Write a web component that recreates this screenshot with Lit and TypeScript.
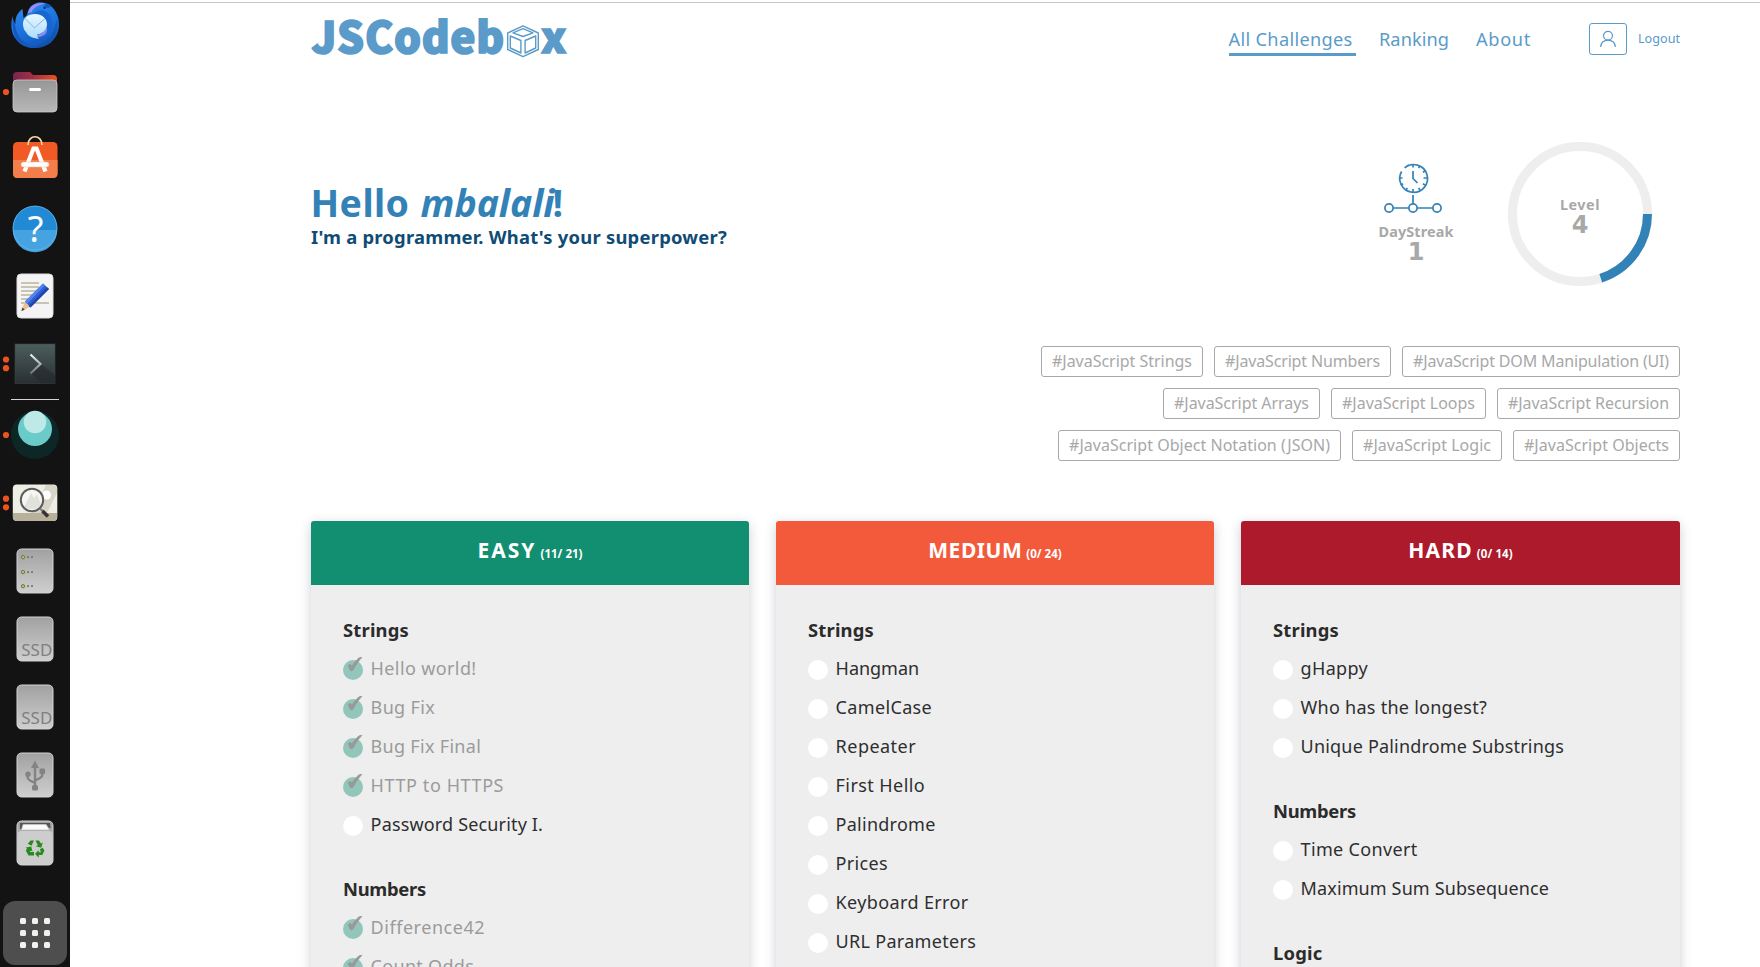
import { LitElement, html, css, svg, nothing } from "lit";
import { customElement, property } from "lit/decorators.js";

/** Single line label whose tracking is adjusted so that it spans `w` pixels. */
@customElement("ui-text")
class UiText extends LitElement {
  @property({ type: Number }) w = 0;
  static styles = css`
    :host { display: inline-block; white-space: nowrap; }
  `;
  firstUpdated() {
    const n = (this.textContent ?? "").length;
    if (!this.w || !n) return;
    const natural = this.getBoundingClientRect().width;
    this.style.letterSpacing = `${((this.w + 2 - natural) / n).toFixed(3)}px`;
  }
  render() {
    return html`<slot></slot>`;
  }
}

type Item = [label: string, width: number, done?: boolean];
type Section = { title: string; w: number; items: Item[] };
type Level = { name: string; w: number; count: string; cw: number; tone: string; sections: Section[] };

const LEVELS: Level[] = [
  {
    name: "EASY", w: 57, count: "(11/ 21)", cw: 40, tone: "easy",
    sections: [
      { title: "Strings", w: 64, items: [["Hello world!", 104, true], ["Bug Fix", 62.5, true], ["Bug Fix Final", 108.5, true], ["HTTP to HTTPS", 131.5, true], ["Password Security I.", 170.5]] },
      { title: "Numbers", w: 81, items: [["Difference42", 112.5, true], ["Count Odds", 101.5, true]] },
    ],
  },
  {
    name: "MEDIUM", w: 92, count: "(0/ 24)", cw: 33.5, tone: "medium",
    sections: [
      { title: "Strings", w: 64, items: [["Hangman", 81.5], ["CamelCase", 94.5], ["Repeater", 78.5], ["First Hello", 87.5], ["Palindrome", 98], ["Prices", 50.5], ["Keyboard Error", 131], ["URL Parameters", 138.5]] },
    ],
  },
  {
    name: "HARD", w: 62.5, count: "(0/ 14)", cw: 34, tone: "hard",
    sections: [
      { title: "Strings", w: 64, items: [["gHappy", 65.5], ["Who has the longest?", 184.5], ["Unique Palindrome Substrings", 261.5]] },
      { title: "Numbers", w: 81, items: [["Time Convert", 115], ["Maximum Sum Subsequence", 246.5]] },
      { title: "Logic", w: 47.5, items: [] },
    ],
  },
];

const TAGS: [string, number][][] = [
  [["#JavaScript Strings", 138], ["#JavaScript Numbers", 153], ["#JavaScript DOM Manipulation (UI)", 254]],
  [["#JavaScript Arrays", 133], ["#JavaScript Loops", 131], ["#JavaScript Recursion", 159]],
  [["#JavaScript Object Notation (JSON)", 259], ["#JavaScript Logic", 126], ["#JavaScript Objects", 143]],
];

@customElement("level-card")
class LevelCard extends LitElement {
  @property({ attribute: false }) level!: Level;
  static styles = css`
    :host { display: block; background: #eee; border-radius: 3px 3px 0 0; box-shadow: 0 3px 12px rgba(40, 50, 80, 0.24); min-height: 700px; }
    .head { height: 64px; border-radius: 3px 3px 0 0; color: #fff; font-weight: 700; display: flex; justify-content: center; gap: 4px; font-size: 21px; line-height: 58px; }
    .count { font-size: 11.5px; line-height: 65px; }
    .easy { background: #128f70; }
    .medium { background: #f35a3b; }
    .hard { background: #ad1a2b; }
    .body { padding: 28px 0 0 32px; }
    .section { padding-bottom: 27px; }
    .title { height: 37px; line-height: 33px; font-size: 18.4px; font-weight: 700; color: #2b2b2b; display: flex; }
    .item { height: 39px; display: flex; gap: 7.6px; font-size: 18px; line-height: 36px; color: #2e2e2e; }
    .done { color: #9b9b9b; }
    .dot { width: 20px; height: 20px; margin-top: 10px; border-radius: 50%; background: #fff; flex: none; }
    .done .dot { background: #92c6ba; }
    .tick { display: block; overflow: visible; }
  `;
  render() {
    const l = this.level;
    return html`
      <div class="head ${l.tone}"><ui-text .w=${l.w}>${l.name}</ui-text><ui-text class="count" .w=${l.cw}>${l.count}</ui-text></div>
      <div class="body">
        ${l.sections.map((s) => html`
          <div class="section">
            <div class="title"><ui-text .w=${s.w}>${s.title}</ui-text></div>
            ${s.items.map(([label, w, done]) => html`
              <div class="item ${done ? "done" : ""}">
                <span class="dot">${done
                  ? html`<svg class="tick" width="20" height="20"><path d="M5.300 5.500C6 4.300 8 4 8.500 5.800L8.900 6.700C11 2.500 14.500 -1.500 17 -2.400L18.800 -2.600C15.500 .8 12.500 5 10.300 9.700C9.500 11 7.600 11.200 7.100 10C6.500 8.400 5.900 7 5.300 5.500Z" fill="#999" stroke="#999" stroke-width=".9" stroke-linejoin="round" /></svg>`
                  : nothing}</span>
                <ui-text .w=${w}>${label}</ui-text>
              </div>`)}
          </div>`)}
      </div>`;
  }
}

const run = (...ys: number[]) => ys.map((y) => svg`<circle cx="6" cy=${y} r="3.1" fill="#ed5320"/>`);
const plate = svg`<rect x="17" y="12" width="36" height="44" rx="4.500" fill="url(#plate)" stroke="#d4d4d4" stroke-width="1"/>`;

@customElement("app-dock")
class AppDock extends LitElement {
  static styles = css`
    :host { display: flex; flex-direction: column; width: 70px; height: 967px; background: #131313; overflow: hidden; flex: none; font-family: "Noto Sans", sans-serif; }
    svg { display: block; flex: none; }
    .rule { height: 1px; margin: 1px 11px; background: #d5d5d5; flex: none; }
    .apps { width: 64px; height: 64px; margin: 24px 3px 0; border-radius: 12px; background: #4e4e4e; flex: none; display: grid; grid-template-columns: repeat(3, 6px); grid-auto-rows: 6px; gap: 6px; place-content: center; }
    .apps i { background: #f2f1ee; border-radius: 1.5px; }
  `;
  slotSvg(content: unknown) {
    return html`<svg width="70" height="68" viewBox="0 0 70 68">
      <defs>
        <linearGradient id="plate" x1="0" y1="0" x2="0" y2="1"><stop offset="0" stop-color="#a1a1a1"/><stop offset="1" stop-color="#cfcfcf"/></linearGradient>
        <linearGradient id="fold" x1="0" y1="0" x2="1" y2="0"><stop offset="0" stop-color="#77264f"/><stop offset=".45" stop-color="#a32f43"/><stop offset="1" stop-color="#e95420"/></linearGradient>
        <linearGradient id="front" x1="0" y1="0" x2="0" y2="1"><stop offset="0" stop-color="#969696"/><stop offset="1" stop-color="#b8b8b8"/></linearGradient>
        <linearGradient id="term" x1="0" y1="0" x2="0" y2="1"><stop offset="0" stop-color="#4c5e5c"/><stop offset="1" stop-color="#292e33"/></linearGradient>
        <linearGradient id="prompt" x1="0" y1="0" x2="0" y2="1"><stop offset="0" stop-color="#f0f0f0"/><stop offset="1" stop-color="#667474"/></linearGradient>
      </defs>${content}</svg>`;
  }
  render() {
    return html`
      <svg width="70" height="58" viewBox="0 0 70 58">
        <defs>
          <linearGradient id="bird" x1=".2" y1="0" x2=".6" y2="1"><stop offset="0" stop-color="#2f8df0"/><stop offset=".6" stop-color="#1a6fdc"/><stop offset="1" stop-color="#1155b8"/></linearGradient>
          <linearGradient id="mail" x1="0" y1="0" x2="0" y2="1"><stop offset="0" stop-color="#e9f7ff"/><stop offset="1" stop-color="#a9dcfb"/></linearGradient>
        </defs>
        <path d="M12.500 16C10.500 24 11 32 15 38C19.500 45 27 48.500 36 48C49 47.500 58.500 38 59 25C59.200 16 55 8 48 4C41 .8 33 2.500 29.500 8C27 12 28 14 26 16L23.500 18L22.500 9C17 13 15 18 15.500 24C13.500 22 12.600 19 12.500 16Z" fill="url(#bird)"/>
        <path d="M28 13C30 5 38 1.500 46 3.400C39 4 34 7 31.500 12Z" fill="#a98cf2"/>
        <path d="M46 3.500Q52 4.500 50.500 7Q47 9 43 7Z" fill="#135ac0"/>
        <circle cx="44.500" cy="8" r="1.100" fill="#082b70"/>
        <path d="M31 15Q41 6 49 14Q55 22 50 32Q45 39 35 38Q47 34 46 24Q44 16 31 15Z" fill="#1767d2"/>
        <path d="M15 24Q16 40 32 46Q23 47 17 40Q12 33 12.500 18Z" fill="#1457bd"/>
        <path d="M57 19Q60 34 49 43Q41 49 31 47Q49 43 54 30Z" fill="#0f50ae" opacity=".6"/>
        <path d="M34 36Q44 34 47 27Q48 34 42 36Q38 38 34 36Z" fill="#8f8af0"/>
        <path d="M23 24C23 18 28 14 35 14C42 14 47 18.500 47 24.500C47 30 42 34 37 34.500Q37 37 39 39C32 38 28 36 26 32Q23 29 23 24Z" fill="url(#mail)"/>
        <path d="M25 18.500L34.500 28L45 18.500" fill="none" stroke="#7fb9ea" stroke-width="1"/>
      </svg>
      ${this.slotSvg(svg`${run(34)}<path d="M13 26V18Q13 14 17 14H29Q31 14 32 16L33 17H53Q57 17 57 21V30H13Z" fill="url(#fold)"/><rect x="13" y="22" width="44" height="32" rx="4" fill="url(#front)" stroke="#cbcbcb" stroke-width=".8"/><rect x="29" y="30" width="12" height="3" rx="1.500" fill="#fff"/>`)}
      ${this.slotSvg(svg`<rect x="13" y="16" width="44.500" height="36" rx="4.500" fill="#f15a24"/><path d="M13 34H57.500V47.500Q57.500 52 53 52H17.500Q13 52 13 47.500Z" fill="#f47d4c"/><path d="M28 19C28 8 42 8 42 19" fill="none" stroke="#f9d9a4" stroke-width="1.700"/><path d="M24.500 45.500L33.500 22.500H36.500L45.500 45.500" fill="none" stroke="#fff" stroke-width="4.200"/><rect x="21" y="36" width="28" height="5" rx="2.500" fill="#fff" stroke="#f3b79b" stroke-width=".5"/>`)}
      ${this.slotSvg(svg`<circle cx="35" cy="34" r="22.300" fill="#228ad5"/><path d="M12.700 36A22.300 22.300 0 0 0 57.300 36Z" fill="#45a3e2"/><circle cx="35" cy="34" r="21.900" fill="none" stroke="#65b2e5" stroke-width=".8"/><text x="35.500" y="47.500" text-anchor="middle" font-size="36" fill="#fff" font-family="Noto Sans">?</text>`)}
      ${this.slotSvg(svg`<rect x="17" y="12" width="36" height="44" rx="4" fill="#f4f4f4" stroke="#ddd"/><path d="M21 21H39M21 25H39M21 29H37M21 33H35M21 37H33M21 41H49" stroke="#c8c4b4" stroke-width="1.800"/><path d="M21.300 49L25 39.500L30 45Z" fill="#f0c08b"/><path d="M21.300 49L22.500 45.500L24.800 47.700Z" fill="#444"/><path d="M25 39.500L43 21.500L49 27L30.500 45.500Z" fill="#2e5ed5"/><path d="M25 39.500L43 21.500L45 23.300L27 42Z" fill="#5484ef"/><path d="M28.700 44L47 25.300L49 27L30.500 45.500Z" fill="#1e46a5"/>`)}
      ${this.slotSvg(svg`${run(29.5, 38.2)}<rect x="15" y="14" width="40" height="39.500" fill="url(#term)" stroke="#38484a" stroke-width=".6"/><path d="M41 34L55 45V53.500H42L31 43Z" fill="#20252a" opacity=".5"/><path d="M30.500 24.500L40.500 34L30.500 43.500" fill="none" stroke="url(#prompt)" stroke-width="2.200"/>`)}
      <div class="rule"></div>
      ${this.slotSvg(svg`${run(34)}<circle cx="35" cy="34" r="24" fill="#0d2726"/><circle cx="35" cy="28" r="17" fill="#6acbc9"/><circle cx="35" cy="21" r="11.300" fill="#bde9e7"/>`)}
      ${this.slotSvg(svg`${run(29.7, 38.3)}<rect x="12.800" y="15.500" width="44.500" height="36.500" rx="4" fill="#eeeee5"/><path d="M13 44H57V48Q57 52 53 52H17Q13 52 13 48Z" fill="#b7b09b"/><path d="M32 44L46 16H53Q57 16 57 20V24L47 44Z" fill="#d9d5c9"/><circle cx="46.500" cy="26" r="4.500" fill="#fff"/><circle cx="32" cy="31" r="11.200" fill="#f7f7f4" fill-opacity=".85"/><path d="M24 38L31 24L34 29L37 25L41 36Q34 43 24 38Z" fill="#e2e2dd"/><circle cx="32" cy="31" r="11.200" fill="none" stroke="#5d5d5d" stroke-width="2"/><path d="M40.500 40L43 42.500" stroke="#777" stroke-width="2"/><path d="M42.500 42L48 47.500" stroke="#333" stroke-width="3.600"/>`)}
      ${this.slotSvg(svg`${plate}${[20.2, 35.1, 49.2].map((y) => svg`<circle cx="23" cy=${y} r="1.700" fill="#a4d13e" stroke="#666f57" stroke-width=".9"/><path d=${`M27 ${y}H29M31 ${y}H33`} stroke="#777" stroke-width="1.800"/>`)}`)}
      ${[0, 1].map(() => this.slotSvg(svg`${plate}<text x="21.300" y="50.800" font-size="15.500" textLength="31" lengthAdjust="spacingAndGlyphs" fill="#808080" font-family="Noto Sans">SSD</text>`))}
      ${this.slotSvg(svg`${plate}<path d="M35 23V46M27.500 33V36Q27.500 38 30 39.500L35 42M42.500 29V33Q42.500 35.500 40 37L35 39.500" fill="none" stroke="#838383" stroke-width="2.400"/><path d="M31 27L35 19.500L39 27Z" fill="#838383"/><circle cx="28" cy="33.300" r="2.700" fill="#838383"/><rect x="39.500" y="27.500" width="5.500" height="5.500" rx="1" fill="#838383"/><rect x="32" y="44" width="6" height="5.500" rx="1.500" fill="#838383"/>`)}
      ${this.slotSvg(svg`${plate}<rect x="17.500" y="22" width="35" height="33.500" rx="4" fill="#cdcdcd"/><path d="M20 14H50L50.500 19H49L46 15H24L21.500 20H20Z" fill="#555"/><path d="M21.500 21L23 15.500H46L49.500 21Z" fill="#fafafa" stroke="#bbb" stroke-width=".7"/>
        <g fill="#268a1c">
          <path d="M30.500 31.500H34L31.500 36.800L27.800 34.800ZM35.500 31.500H39L41 34.500L42.800 33.600L41.200 38.800L35.800 37.200L37.800 36.200Z"/>
          <path d="M39.800 40.300L42.800 38.800L44.400 41.500L42.300 46H38.800V48.800L35 44.800L38.800 41.200V43.200H41Z"/>
          <path d="M25.800 38.600L31.200 37.600L32.500 42.300L30.700 41.500L30 43H34V46.500H28.500L25.800 41.500L27 39.800Z"/>
        </g>`)}
      <div class="apps">${Array.from({ length: 9 }, () => html`<i></i>`)}</div>`;
  }
}

@customElement("app-root")
class AppRoot extends LitElement {
  static styles = css`
    :host { display: flex; width: 1760px; height: 967px; overflow: hidden; background: #fff; font-family: "Noto Sans", "Open Sans", sans-serif; }
    main { flex: 1; min-width: 0; margin-top: 2px; border-top: 1px solid #c6c6c6; }
    .wrap { width: 1369px; margin-left: 241px; }
    header { display: flex; justify-content: space-between; height: 139px; color: #5a9bc9; }
    .logo { display: flex; font: 900 42.5px/64px "Noto Sans CJK JP", sans-serif; gap: 1px; padding-left: 0.5px; -webkit-text-stroke: 1.6px #5a9bc9; }
    .cube { margin-top: 22px; }
    nav { display: flex; padding-top: 22px; font-size: 18.2px; line-height: 28px; align-items: flex-start; }
    .link { margin-right: 27px; }
    .active { padding-right: 3px; margin-right: 23.4px; border-bottom: 3px solid #5a9bc9; }
    .about { margin-right: 58px; }
    .user { width: 36px; height: 30px; margin: -2px 11px 0 0; border: 1px solid #5a9bc9; border-radius: 3px; }
    .logout { font-size: 12.6px; line-height: 28px; }
    svg { display: block; }
    .hero { display: flex; height: 144px; margin-bottom: 60px; }
    .greet { flex: 1; padding-top: 37px; display: flex; flex-direction: column; align-items: flex-start; }
    .hello { display: flex; font-size: 37.5px; line-height: 48px; font-weight: 700; color: #3282b8; margin-left: -0.5px; }
    .name { margin-left: 11px; margin-right: -2px; font-style: italic; }
    .motto { margin-top: -1px; font-size: 18.4px; line-height: 22px; font-weight: 700; color: #0f4c75; }
    .streak { width: 80px; padding-top: 20px; margin-right: 52px; display: flex; flex-direction: column; align-items: center; color: #a8a8a8; font-weight: 700; }
    .streak svg { margin: 0 6px 8px 0; }
    .cap { font-size: 14.4px; line-height: 20px; }
    .num { margin-top: -2px; font: 700 24px/24px "DejaVu Sans", sans-serif; }
    .ring { display: grid; width: 144px; margin-right: 28px; }
    .ring > * { grid-area: 1 / 1; }
    .inner { display: flex; flex-direction: column; align-items: center; padding-top: 53px; color: #a8a8a8; font-weight: 700; }
    .tags { display: grid; gap: 11px; margin-bottom: 60px; }
    .row { display: flex; justify-content: flex-end; gap: 11px; }
    .tag { box-sizing: border-box; height: 31px; padding: 0 10px; border: 1px solid #a8a8a8; border-radius: 3px; color: #a8a8a8; font-size: 16px; line-height: 29px; }
    .cols { display: grid; grid-template-columns: 438px 438px 439px; gap: 27px; }
  `;
  render() {
    return html`
      <app-dock></app-dock>
      <main><div class="wrap">
        <header>
          <div class="logo">
            <ui-text .w=${191.5}>JSCodeb</ui-text>
            <svg class="cube" width="34" height="34" fill="none" stroke="#5a9bc9" stroke-width="1.400" stroke-linejoin="round">
              <path d="M17 .9L32.300 8V24.500L17 31.600L1.700 24.500V8ZM17 3.700L27 7.800L17 11.500L7 7.800ZM4.300 11L14.900 15.500V28L4.300 23ZM29.700 11L19.100 15.500V28L29.700 23Z"/>
            </svg>
            <ui-text .w=${24}>x</ui-text>
          </div>
          <nav>
            <span class="link active"><ui-text .w=${122}>All Challenges</ui-text></span>
            <span class="link"><ui-text .w=${68}>Ranking</ui-text></span>
            <span class="about"><ui-text .w=${53}>About</ui-text></span>
            <span class="user"><svg width="36" height="30" fill="none" stroke="#5a9bc9" stroke-width="1.200"><circle cx="18" cy="11.700" r="4.400"/><path d="M10.700 23C10.700 13.800 25.300 13.800 25.300 23"/></svg></span>
            <ui-text class="logout" .w=${40}>Logout</ui-text>
          </nav>
        </header>
        <section class="hero">
          <div class="greet">
            <div class="hello"><ui-text .w=${97}>Hello</ui-text><ui-text class="name" .w=${132}>mbalali</ui-text><ui-text>!</ui-text></div>
            <ui-text class="motto" .w=${414}>I'm a programmer. What's your superpower?</ui-text>
          </div>
          <div class="streak">
            <svg width="60" height="52" fill="none" stroke="#3282b8" stroke-width="1.700">
              <path d="M21.600 5.900A13.900 13.900 0 1 1 18.600 9.500"/><path d="M24 4L26 2.900"/>
              <path d="M30 9V16.500L34.500 21"/>
              <path d="M30 2V5.500M30 27V30.500M16 16H19.500M40.500 16H44M37 3.900L35.700 6.100M42.100 9L39.900 10.300M42.100 23L39.900 21.700M37 28.100L35.700 25.900M23 28.100L24.300 25.900M17.900 23L20.100 21.700"/>
              <path d="M30 33V42M10.200 46H25.800M34.200 46H49.800"/>
              <circle cx="6" cy="46" r="4.100"/><circle cx="30" cy="46" r="4.100"/><circle cx="54" cy="46" r="4.100"/>
            </svg>
            <ui-text class="cap" .w=${73}>DayStreak</ui-text>
            <span class="num">1</span>
          </div>
          <div class="ring">
            <svg width="144" height="144" fill="none" stroke-width="9">
              <circle cx="72" cy="72" r="67.500" stroke="#eee"/>
              <circle cx="72" cy="72" r="67.500" stroke="#3282b8" pathLength="100" stroke-dasharray="20 80"/>
            </svg>
            <div class="inner"><ui-text class="cap" .w=${38}>Level</ui-text><span class="num">4</span></div>
          </div>
        </section>
        <section class="tags">
          ${TAGS.map((r) => html`<div class="row">${r.map(([t, w]) => html`<span class="tag"><ui-text .w=${w}>${t}</ui-text></span>`)}</div>`)}
        </section>
        <section class="cols">${LEVELS.map((l) => html`<level-card .level=${l}></level-card>`)}</section>
      </div></main>`;
  }
}
